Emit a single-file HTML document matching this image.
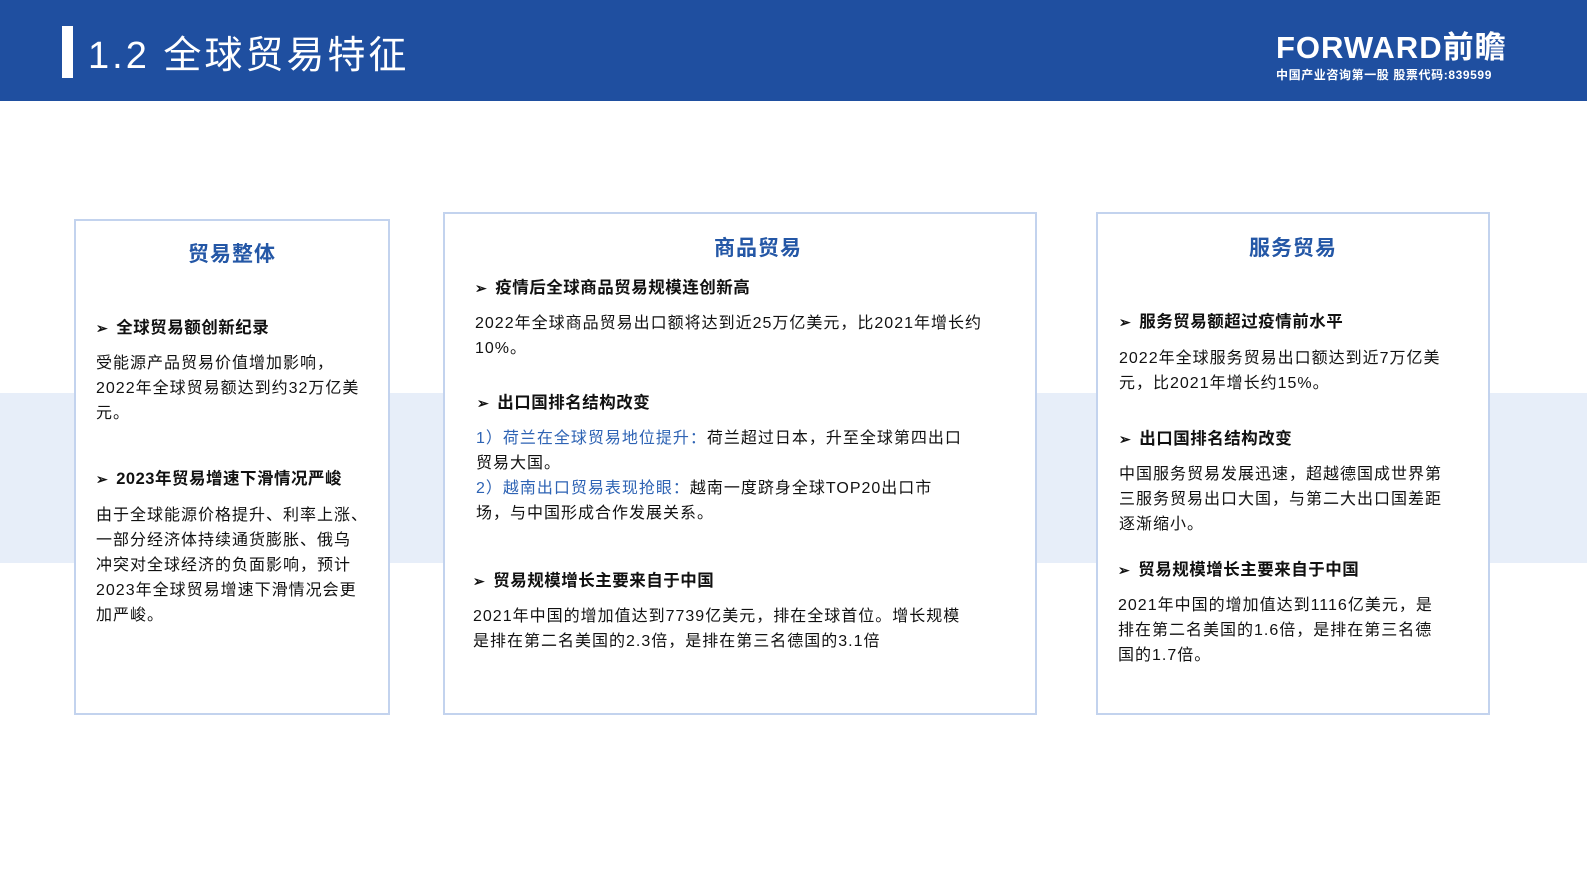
<!DOCTYPE html>
<html><head><meta charset="utf-8"><style>
*{margin:0;padding:0;box-sizing:border-box}
body{width:1587px;height:892px;background:#fff;position:relative;overflow:hidden;font-family:"Liberation Sans","Noto Sans CJK SC",sans-serif;color:#111}
.hdr{position:absolute;left:0;top:0;width:1587px;height:101px;background:#1f4fa0}
.bar{position:absolute;left:62px;top:26px;width:11px;height:52px;background:#fff}
.ttl{position:absolute;left:88px;top:33px;font-size:38px;color:#fff;letter-spacing:3px;line-height:46px}
.logo{position:absolute;left:1276px;top:30px;color:#fff;font-weight:bold;font-size:31px;line-height:36px;letter-spacing:1px}
.sub{position:absolute;left:1276px;top:66px;color:#fff;font-size:12px;font-weight:bold;letter-spacing:.6px}
.band{position:absolute;left:0;top:393px;width:1587px;height:170px;background:#e7eef9}
.box{position:absolute;background:#fff;border:2px solid #c3d3ee}
.h{position:absolute;font-size:21px;font-weight:bold;color:#2457a6;text-align:center;letter-spacing:1px}
.t{position:absolute;font-size:16px;line-height:25px;letter-spacing:1px;white-space:nowrap}
.b{position:absolute;font-size:16.5px;font-weight:bold;line-height:25px;letter-spacing:.5px}
.b:before{content:"➢";margin-right:8px;font-size:14px}
.bl{color:#2e63b4}
</style></head><body>
<div class="hdr"></div><div class="bar"></div>
<div class="ttl">1.2 全球贸易特征</div>
<div class="logo">FORWARD前瞻</div>
<div class="sub">中国产业咨询第一股 股票代码:839599</div>
<div class="band"></div>

<div class="box" style="left:74px;top:219px;width:316px;height:496px"></div>
<div class="box" style="left:443px;top:212px;width:594px;height:503px"></div>
<div class="box" style="left:1096px;top:212px;width:394px;height:503px"></div>

<div class="h" style="left:74px;top:238px;width:316px">贸易整体</div>
<div class="b" style="left:96px;top:316px">全球贸易额创新纪录</div>
<div class="t" style="left:96px;top:351px">受能源产品贸易价值增加影响，<br>2022年全球贸易额达到约32万亿美<br>元。</div>
<div class="b" style="left:96px;top:467px">2023年贸易增速下滑情况严峻</div>
<div class="t" style="left:96px;top:503px">由于全球能源价格提升、利率上涨、<br>一部分经济体持续通货膨胀、俄乌<br>冲突对全球经济的负面影响，预计<br>2023年全球贸易增速下滑情况会更<br>加严峻。</div>

<div class="h" style="left:443px;top:232px;width:630px">商品贸易</div>
<div class="b" style="left:475px;top:276px">疫情后全球商品贸易规模连创新高</div>
<div class="t" style="left:475px;top:311px">2022年全球商品贸易出口额将达到近25万亿美元，比2021年增长约<br>10%。</div>
<div class="b" style="left:477px;top:391px">出口国排名结构改变</div>
<div class="t" style="left:476px;top:426px"><span class="bl">1）荷兰在全球贸易地位提升：</span>荷兰超过日本，升至全球第四出口<br>贸易大国。<br><span class="bl">2）越南出口贸易表现抢眼：</span>越南一度跻身全球TOP20出口市<br>场，与中国形成合作发展关系。</div>
<div class="b" style="left:473px;top:569px">贸易规模增长主要来自于中国</div>
<div class="t" style="left:473px;top:604px">2021年中国的增加值达到7739亿美元，排在全球首位。增长规模<br>是排在第二名美国的2.3倍，是排在第三名德国的3.1倍</div>

<div class="h" style="left:1096px;top:232px;width:394px">服务贸易</div>
<div class="b" style="left:1119px;top:310px">服务贸易额超过疫情前水平</div>
<div class="t" style="left:1119px;top:346px">2022年全球服务贸易出口额达到近7万亿美<br>元，比2021年增长约15%。</div>
<div class="b" style="left:1119px;top:427px">出口国排名结构改变</div>
<div class="t" style="left:1119px;top:462px">中国服务贸易发展迅速，超越德国成世界第<br>三服务贸易出口大国，与第二大出口国差距<br>逐渐缩小。</div>
<div class="b" style="left:1118px;top:558px">贸易规模增长主要来自于中国</div>
<div class="t" style="left:1118px;top:593px">2021年中国的增加值达到1116亿美元，是<br>排在第二名美国的1.6倍，是排在第三名德<br>国的1.7倍。</div>
</body></html>
